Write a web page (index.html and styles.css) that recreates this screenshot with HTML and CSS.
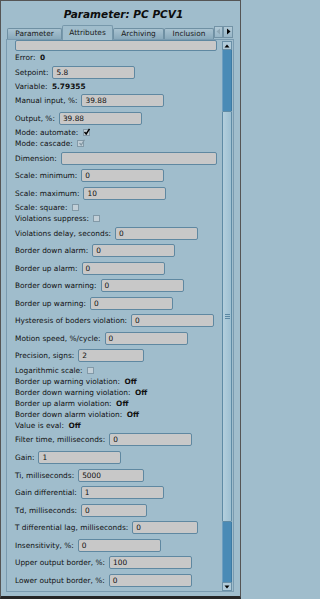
FILE: index.html
```html
<!DOCTYPE html>
<html>
<head>
<meta charset="utf-8">
<link rel="stylesheet" href="styles.css">
</head>
<body>
<div class="window">
  <div class="title">Parameter: PC PCV1</div>
  <div class="tabbar">
    <div class="tab w55">Parameter</div>
    <div class="tab active w51">Attributes</div>
    <div class="tab w51">Archiving</div>
    <div class="tab w50">Inclusion</div>
    <div class="tabscroll">
      <div class="tsbtn"><svg width="5" height="7" viewBox="0 0 5 7"><path d="M4 0.5 L0.5 3.5 L4 6.5 Z" fill="#8ea7b5"/></svg></div>
      <div class="tsbtn"><svg width="5" height="7" viewBox="0 0 5 7"><path d="M1 0.5 L4.5 3.5 L1 6.5 Z" fill="#000"/></svg></div>
    </div>
  </div>
  <div class="pane">
    <div class="content">
      <div class="row first"><div class="field top"></div></div>
      <div class="row t"><span>Error:</span><b>0</b></div>
      <div class="row f"><span>Setpoint:</span><div class="field">5.8</div></div>
      <div class="row t"><span>Variable:</span><b>5.79355</b></div>
      <div class="row f"><span>Manual input, %:</span><div class="field">39.88</div></div>
      <div class="row f"><span>Output, %:</span><div class="field">39.88</div></div>
      <div class="row t"><span>Mode: automate:</span><span class="cb"><svg width="8" height="8" viewBox="0 0 8 8"><path d="M1.5 4 L3.2 6 L6.5 0.8" stroke="#000" stroke-width="1.4" fill="none"/></svg></span></div>
      <div class="row t"><span>Mode: cascade:</span><span class="cb"><svg width="8" height="8" viewBox="0 0 8 8"><path d="M1.5 4 L3.2 6 L6.5 0.8" stroke="#8197a4" stroke-width="1.2" fill="none"/></svg></span></div>
      <div class="row f"><span>Dimension:</span><div class="field wide"></div></div>
      <div class="row f"><span>Scale: minimum:</span><div class="field">0</div></div>
      <div class="row f"><span>Scale: maximum:</span><div class="field">10</div></div>
      <div class="row t"><span>Scale: square:</span><span class="cb"></span></div>
      <div class="row t"><span>Violations suppress:</span><span class="cb"></span></div>
      <div class="row f"><span>Violations delay, seconds:</span><div class="field">0</div></div>
      <div class="row f"><span>Border down alarm:</span><div class="field">0</div></div>
      <div class="row f"><span>Border up alarm:</span><div class="field">0</div></div>
      <div class="row f"><span>Border down warning:</span><div class="field">0</div></div>
      <div class="row f"><span>Border up warning:</span><div class="field">0</div></div>
      <div class="row f"><span>Hysteresis of boders violation:</span><div class="field">0</div></div>
      <div class="row f"><span>Motion speed, %/cycle:</span><div class="field">0</div></div>
      <div class="row f"><span>Precision, signs:</span><div class="field s">2</div></div>
      <div class="row t"><span>Logarithmic scale:</span><span class="cb"></span></div>
      <div class="row t"><span>Border up warning violation:</span><b>Off</b></div>
      <div class="row t"><span>Border down warning violation:</span><b>Off</b></div>
      <div class="row t"><span>Border up alarm violation:</span><b>Off</b></div>
      <div class="row t"><span>Border down alarm violation:</span><b>Off</b></div>
      <div class="row t"><span>Value is eval:</span><b>Off</b></div>
      <div class="row f"><span>Filter time, milliseconds:</span><div class="field">0</div></div>
      <div class="row f"><span>Gain:</span><div class="field">1</div></div>
      <div class="row f"><span>Ti, milliseconds:</span><div class="field s">5000</div></div>
      <div class="row f"><span>Gain differential:</span><div class="field">1</div></div>
      <div class="row f"><span>Td, milliseconds:</span><div class="field s">0</div></div>
      <div class="row f"><span>T differential lag, milliseconds:</span><div class="field s">0</div></div>
      <div class="row f"><span>Insensitivity, %:</span><div class="field">0</div></div>
      <div class="row f"><span>Upper output border, %:</span><div class="field">100</div></div>
      <div class="row f"><span>Lower output border, %:</span><div class="field">0</div></div>
    </div>
    <div class="vscroll">
      <div class="sbtn"><svg width="6" height="4" viewBox="0 0 6 4"><path d="M0.5 3.5 L3 0.5 L5.5 3.5 Z" fill="#000"/></svg></div>
      <div class="track t1"></div>
      <div class="thumb"><div class="grip"><i></i><i></i><i></i></div></div>
      <div class="track t2"></div>
      <div class="sbtn"><svg width="6" height="4" viewBox="0 0 6 4"><path d="M0.5 0.5 L3 3.5 L5.5 0.5 Z" fill="#000"/></svg></div>
    </div>
  </div>
</div>
</body>
</html>
```
FILE: styles.css
```css
* { box-sizing: border-box; }
html, body { margin: 0; padding: 0; }
body {
  width: 241px;
  height: 599px;
  overflow: hidden;
  font-family: "DejaVu Sans", sans-serif;
  font-size: 7.4px;
  color: #111;
  background: #a0bdcc;
}
.window {
  width: 241px;
  height: 599px;
  border: 1px solid #555;
  border-bottom: 3px solid #262626;
  background: #a0bdcc;
  display: flex;
  flex-direction: column;
}
.title {
  flex: none;
  height: 23.5px;
  padding: 7px 0 4.5px 6px;
  line-height: 12px;
  text-align: center;
  font-weight: bold;
  font-style: italic;
  font-size: 10.5px;
  color: #0d0d0d;
}
.tabbar {
  flex: none;
  height: 14.5px;
  display: flex;
  align-items: flex-end;
  padding-left: 6px;
  position: relative;
  z-index: 1;
}
.tab {
  flex: none;
  height: 11px;
  border: 1px solid #6f90a3;
  border-bottom: none;
  border-radius: 2px 2px 0 0;
  background: linear-gradient(#a9c3d1, #89a9bb);
  text-align: center;
  line-height: 10px;
  color: #1a1a1a;
}
.tab.active {
  height: 15.5px;
  margin-bottom: -1px;
  background: #a0bdcc;
  line-height: 13px;
  border-color: #7798ab;
}
.w55 { width: 55px; }
.w51 { width: 51px; }
.w50 { width: 50px; }
.tabscroll {
  display: flex;
  margin-bottom: 1.5px;
  margin-left: 0.3px;
}
.tsbtn {
  width: 9.2px;
  height: 11.5px;
  border: 1px solid #7393a6;
  background: linear-gradient(#b2cad7, #98b6c7);
  display: flex;
  align-items: center;
  justify-content: center;
}
.pane {
  flex: none;
  height: 553px;
  margin: 0 6px 0 5px;
  border: 1px solid #7a9bb0;
  display: flex;
}
.content {
  flex: 1;
  padding-left: 8px;
  overflow: hidden;
}
.row {
  display: flex;
  align-items: center;
  gap: 4px;
  white-space: nowrap;
}
.row.t { height: 11.1px; gap: 4.5px; }
.row.f { height: 17.55px; }
.row.first { height: 12.45px; align-items: flex-start; }
.field {
  flex: none;
  width: 83px;
  height: 13px;
  border: 1px solid #5f88a1;
  border-radius: 2px;
  background: #c8c8c8;
  padding-left: 3px;
  line-height: 11px;
  color: #111;
}
.field.s { width: 66px; }
.field.wide { flex: 1; margin-right: 5.3px; }
.field.top { width: 201.7px; height: 10.7px; }
.cb {
  flex: none;
  width: 7px;
  height: 7px;
  border: 1px solid #8299a7;
  background: #c2cfd7;
  position: relative;
}
.cb svg { position: absolute; left: -0.5px; top: -2px; }
.vscroll {
  flex: none;
  width: 10px;
  margin-right: 1px;
  padding-top: 1px;
  display: flex;
  flex-direction: column;
}
.sbtn {
  flex: none;
  height: 9px;
  border: 1px solid #6a90a7;
  background: #b1cbd9;
  display: flex;
  align-items: center;
  justify-content: center;
}
.track {
  flex: none;
  background: #4a8bb6;
  border-left: 1px solid #6f9fc0;
  border-right: 1px solid #3d7aa3;
}
.t1 { height: 61px; }
.t2 { height: 60px; }
.thumb {
  flex: none;
  height: 411px;
  border: 1px solid #5f8ba5;
  border-radius: 1px;
  background: linear-gradient(90deg, #b3cfdd, #9ec0d2);
  display: flex;
  align-items: center;
  justify-content: center;
}
.grip { display: flex; flex-direction: column; gap: 1px; }
.grip i { display: block; width: 5px; height: 1px; background: #5b88a3; }
```
